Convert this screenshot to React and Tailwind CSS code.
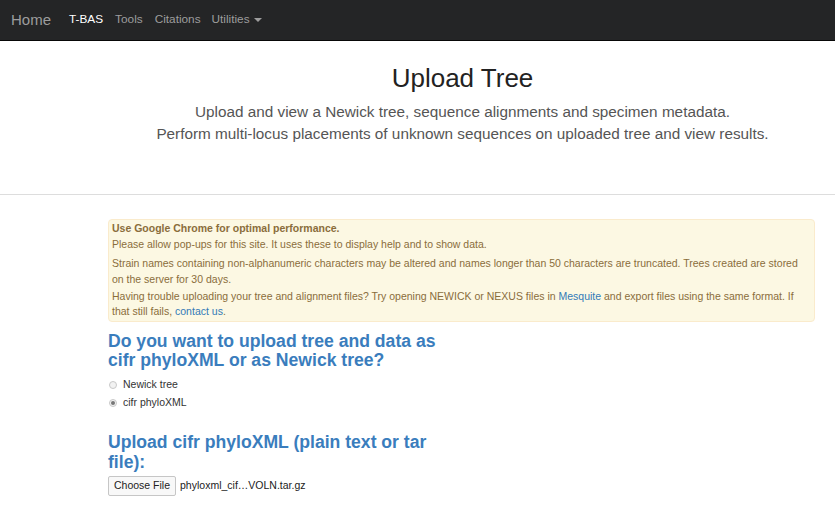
import React from "react";

export default function App() {
  return (
    <div className="w-[835px] h-[506px] overflow-hidden bg-white" style={{ fontFamily: '"Liberation Sans", Arial, sans-serif' }}>
      <nav className="h-[41px] bg-[#242526] border-b border-[#080808] flex items-center">
        <span className="ml-[11px] text-[15px] text-[#9d9d9d]">Home</span>
        <span className="ml-[18px] text-[11.8px] text-white">T-BAS</span>
        <span className="ml-[12px] text-[11.8px] text-[#9d9d9d]">Tools</span>
        <span className="ml-[12px] text-[11.8px] text-[#9d9d9d]">Citations</span>
        <span className="ml-[11px] text-[11.8px] text-[#9d9d9d] flex items-center">
          Utilities
          <span className="ml-[4px] w-0 h-0 border-l-[4px] border-r-[4px] border-t-[4px] border-l-transparent border-r-transparent border-t-[#9d9d9d]" />
        </span>
      </nav>

      <div className="h-[154px] pl-[90px] flex flex-col items-center text-center border-b border-[#dddddd]">
        <h1 className="mt-[21px] text-[26px] font-light text-[#222] leading-[32px]">Upload Tree</h1>
        <p className="mt-[7px] text-[15.3px] text-[#555] leading-[22px]">
          Upload and view a Newick tree, sequence alignments and specimen metadata.
        </p>
        <p className="text-[15.3px] text-[#555] leading-[22px]">
          Perform multi-locus placements of unknown sequences on uploaded tree and view results.
        </p>
      </div>

      <div className="ml-[108px] mr-[20px] mt-[24px]">
        <div className="bg-[#fcf8e3] border border-[#faebcc] rounded-[4px] px-[3px] pt-[1px] pb-[1px] text-[10.5px] leading-[15.5px] text-[#8a6d3b]">
          <p className="font-bold">Use Google Chrome for optimal performance.</p>
          <p>Please allow pop-ups for this site. It uses these to display help and to show data.</p>
          <p className="mt-[4px]">
            Strain names containing non-alphanumeric characters may be altered and names longer than 50 characters are truncated. Trees created are stored on the server for 30 days.
          </p>
          <p className="mt-[1.5px]">
            Having trouble uploading your tree and alignment files? Try opening NEWICK or NEXUS files in <span className="text-[#337ab7]">Mesquite</span> and export files using the same format. If that still fails, <span className="text-[#337ab7]">contact us</span>.
          </p>
        </div>

        <div className="w-[340px]">
          <h2 className="mt-[10px] text-[17.6px] font-bold leading-[19px] text-[#3a7dbd]">
            Do you want to upload tree and data as cifr phyloXML or as Newick tree?
          </h2>
          <div className="mt-[9px] flex flex-col gap-[5px] text-[10.5px] text-[#333]">
            <label className="flex items-center gap-[6px] h-[13px]">
              <span className="ml-[1px] w-[8px] h-[8px] rounded-full border border-[#c8c8c8] bg-[#f2f2f2]" />
              Newick tree
            </label>
            <label className="flex items-center gap-[6px] h-[13px]">
              <span className="ml-[1px] w-[8px] h-[8px] rounded-full border border-[#c8c8c8] bg-[#f2f2f2] flex items-center justify-center">
                <span className="w-[4px] h-[4px] rounded-full bg-[#777]" />
              </span>
              cifr phyloXML
            </label>
          </div>
          <h2 className="mt-[22px] text-[17.6px] font-bold leading-[20px] text-[#3a7dbd]">
            Upload cifr phyloXML (plain text or tar file):
          </h2>
          <div className="mt-[4px] flex items-center text-[10.5px] text-[#222]">
            <span className="px-[5px] h-[20px] flex items-center border border-[#c6c6c6] bg-[#f8f8f8] rounded-[2px]">Choose File</span>
            <span className="ml-[4px]">phyloxml_cif…VOLN.tar.gz</span>
          </div>
        </div>
      </div>
    </div>
  );
}
